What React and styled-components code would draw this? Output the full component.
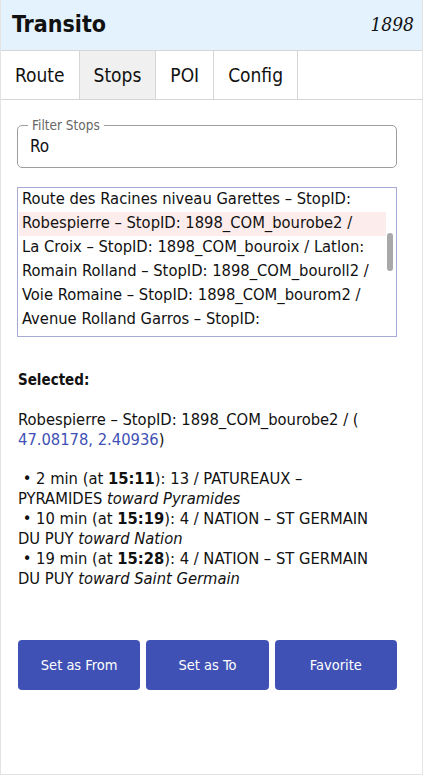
import React from "react";
import styled, { createGlobalStyle } from "styled-components";

const Global = createGlobalStyle`
  html, body { margin: 0; padding: 0; background: #fff; }
  body { font-family: "DejaVu Sans Condensed", "DejaVu Sans", sans-serif; color: #111; }
  * { box-sizing: border-box; }
`;

const Frame = styled.div`
  width: 423px;
  height: 775px;
  border: 1px solid #e3e3e3;
  border-top: none;
  display: flex;
  flex-direction: column;
  overflow: hidden;
`;

const Header = styled.header`
  height: 51px;
  background: #e3f2fd;
  border-bottom: 1px solid #d6d6d6;
  display: flex;
  align-items: center;
  justify-content: space-between;
  padding: 0 8px 2px 11px;
`;

const Title = styled.h1`
  margin: 0;
  font-size: 23px;
  font-weight: bold;
  color: #111;
`;

const Agency = styled.span`
  font-family: "DejaVu Serif Condensed", "DejaVu Serif", serif;
  font-style: italic;
  font-size: 19px;
  color: #111;
`;

const Tabs = styled.nav`
  display: flex;
  height: 49px;
  border-bottom: 1px solid #d6d6d6;
`;

const Tab = styled.div`
  display: flex;
  align-items: center;
  padding: 0 14px 1px 14px;
  font-size: 19px;
  border-right: 1px solid #d6d6d6;
  background: ${(p) => (p.$active ? "#f0f0f0" : "#fff")};
`;

const Body = styled.main`
  padding: 20px 25px 0 16px;
  display: flex;
  flex-direction: column;
`;

const Field = styled.fieldset`
  margin: 0;
  padding: 0 12px 0 11px;
  border: 1px solid #9e9e9e;
  border-radius: 5px;
  height: 48px;
  legend {
    padding: 0 4px;
    margin-left: -1px;
    font-size: 13.5px;
    color: #666;
    line-height: 10px;
  }
`;

const FieldValue = styled.div`
  font-size: 17px;
  line-height: 20px;
  margin-top: 6px;
  padding-left: 1px;
`;

const ListBox = styled.div`
  margin-top: 19px;
  height: 150px;
  border: 1px solid #a9a9d6;
  padding-left: 1px;
  display: flex;
  position: relative;
  overflow: hidden;
`;

const Items = styled.div`
  flex: 1;
`;

const Item = styled.div`
  height: 24px;
  line-height: 21px;
  padding-left: 3px;
  font-size: 16.4px;
  white-space: nowrap;
  overflow: hidden;
  background: ${(p) => (p.$sel ? "#fdecec" : "transparent")};
`;

const Track = styled.div`
  width: 10px;
  position: relative;
`;

const Thumb = styled.div`
  position: absolute;
  left: 1px;
  top: 45px;
  width: 6px;
  height: 38px;
  border-radius: 3px;
  background: #a8a8a8;
`;

const SelectedLabel = styled.div`
  margin-top: 33px;
  font-weight: bold;
  font-size: 15px;
  line-height: 20px;
  padding-left: 1px;
`;

const Info = styled.div`
  margin-top: 20px;
  font-size: 16.4px;
  line-height: 20px;
  padding-left: 1px;
`;

const Coord = styled.span`
  color: #3f51b5;
`;

const Gap = styled.div`
  height: 19px;
`;

const Buttons = styled.div`
  margin-top: 51px;
  display: flex;
  gap: 6px;
  padding-left: 1px;
`;

const Button = styled.button`
  width: 123px;
  height: 50px;
  border: none;
  border-radius: 4px;
  background: #3f51b5;
  color: #fff;
  font-family: inherit;
  font-size: 14.5px;
`;

const items = [
  "Route des Racines niveau Garettes – StopID:",
  "Robespierre – StopID: 1898_COM_bourobe2 /",
  "La Croix – StopID: 1898_COM_bouroix / Latlon:",
  "Romain Rolland – StopID: 1898_COM_bouroll2 /",
  "Voie Romaine – StopID: 1898_COM_bourom2 /",
  "Avenue Rolland Garros – StopID:",
];

const departures = [
  { mins: 2, at: "15:11", route: "13 / PATUREAUX –", route2: "PYRAMIDES", to: "Pyramides" },
  { mins: 10, at: "15:19", route: "4 / NATION – ST GERMAIN", route2: "DU PUY", to: "Nation" },
  { mins: 19, at: "15:28", route: "4 / NATION – ST GERMAIN", route2: "DU PUY", to: "Saint Germain" },
];

export default function App() {
  return (
    <>
      <Global />
      <Frame>
        <Header>
          <Title>Transito</Title>
          <Agency>1898</Agency>
        </Header>
        <Tabs>
          <Tab>Route</Tab>
          <Tab $active>Stops</Tab>
          <Tab>POI</Tab>
          <Tab>Config</Tab>
        </Tabs>
        <Body>
          <Field>
            <legend>Filter Stops</legend>
            <FieldValue>Ro</FieldValue>
          </Field>
          <ListBox>
            <Items>
              {items.map((t, i) => (
                <Item key={i} $sel={i === 1}>{t}</Item>
              ))}
            </Items>
            <Track>
              <Thumb />
            </Track>
          </ListBox>
          <SelectedLabel>Selected:</SelectedLabel>
          <Info>
            Robespierre – StopID: 1898_COM_bourobe2 / (
            <br />
            <Coord>47.08178, 2.40936</Coord>)
            <Gap />
            {departures.map((d, i) => (
              <div key={i}>
                &nbsp;• {d.mins} min (at <b>{d.at}</b>): {d.route}
                <br />
                {d.route2} <i>toward {d.to}</i>
              </div>
            ))}
          </Info>
          <Buttons>
            <Button>Set as From</Button>
            <Button>Set as To</Button>
            <Button>Favorite</Button>
          </Buttons>
        </Body>
      </Frame>
    </>
  );
}
